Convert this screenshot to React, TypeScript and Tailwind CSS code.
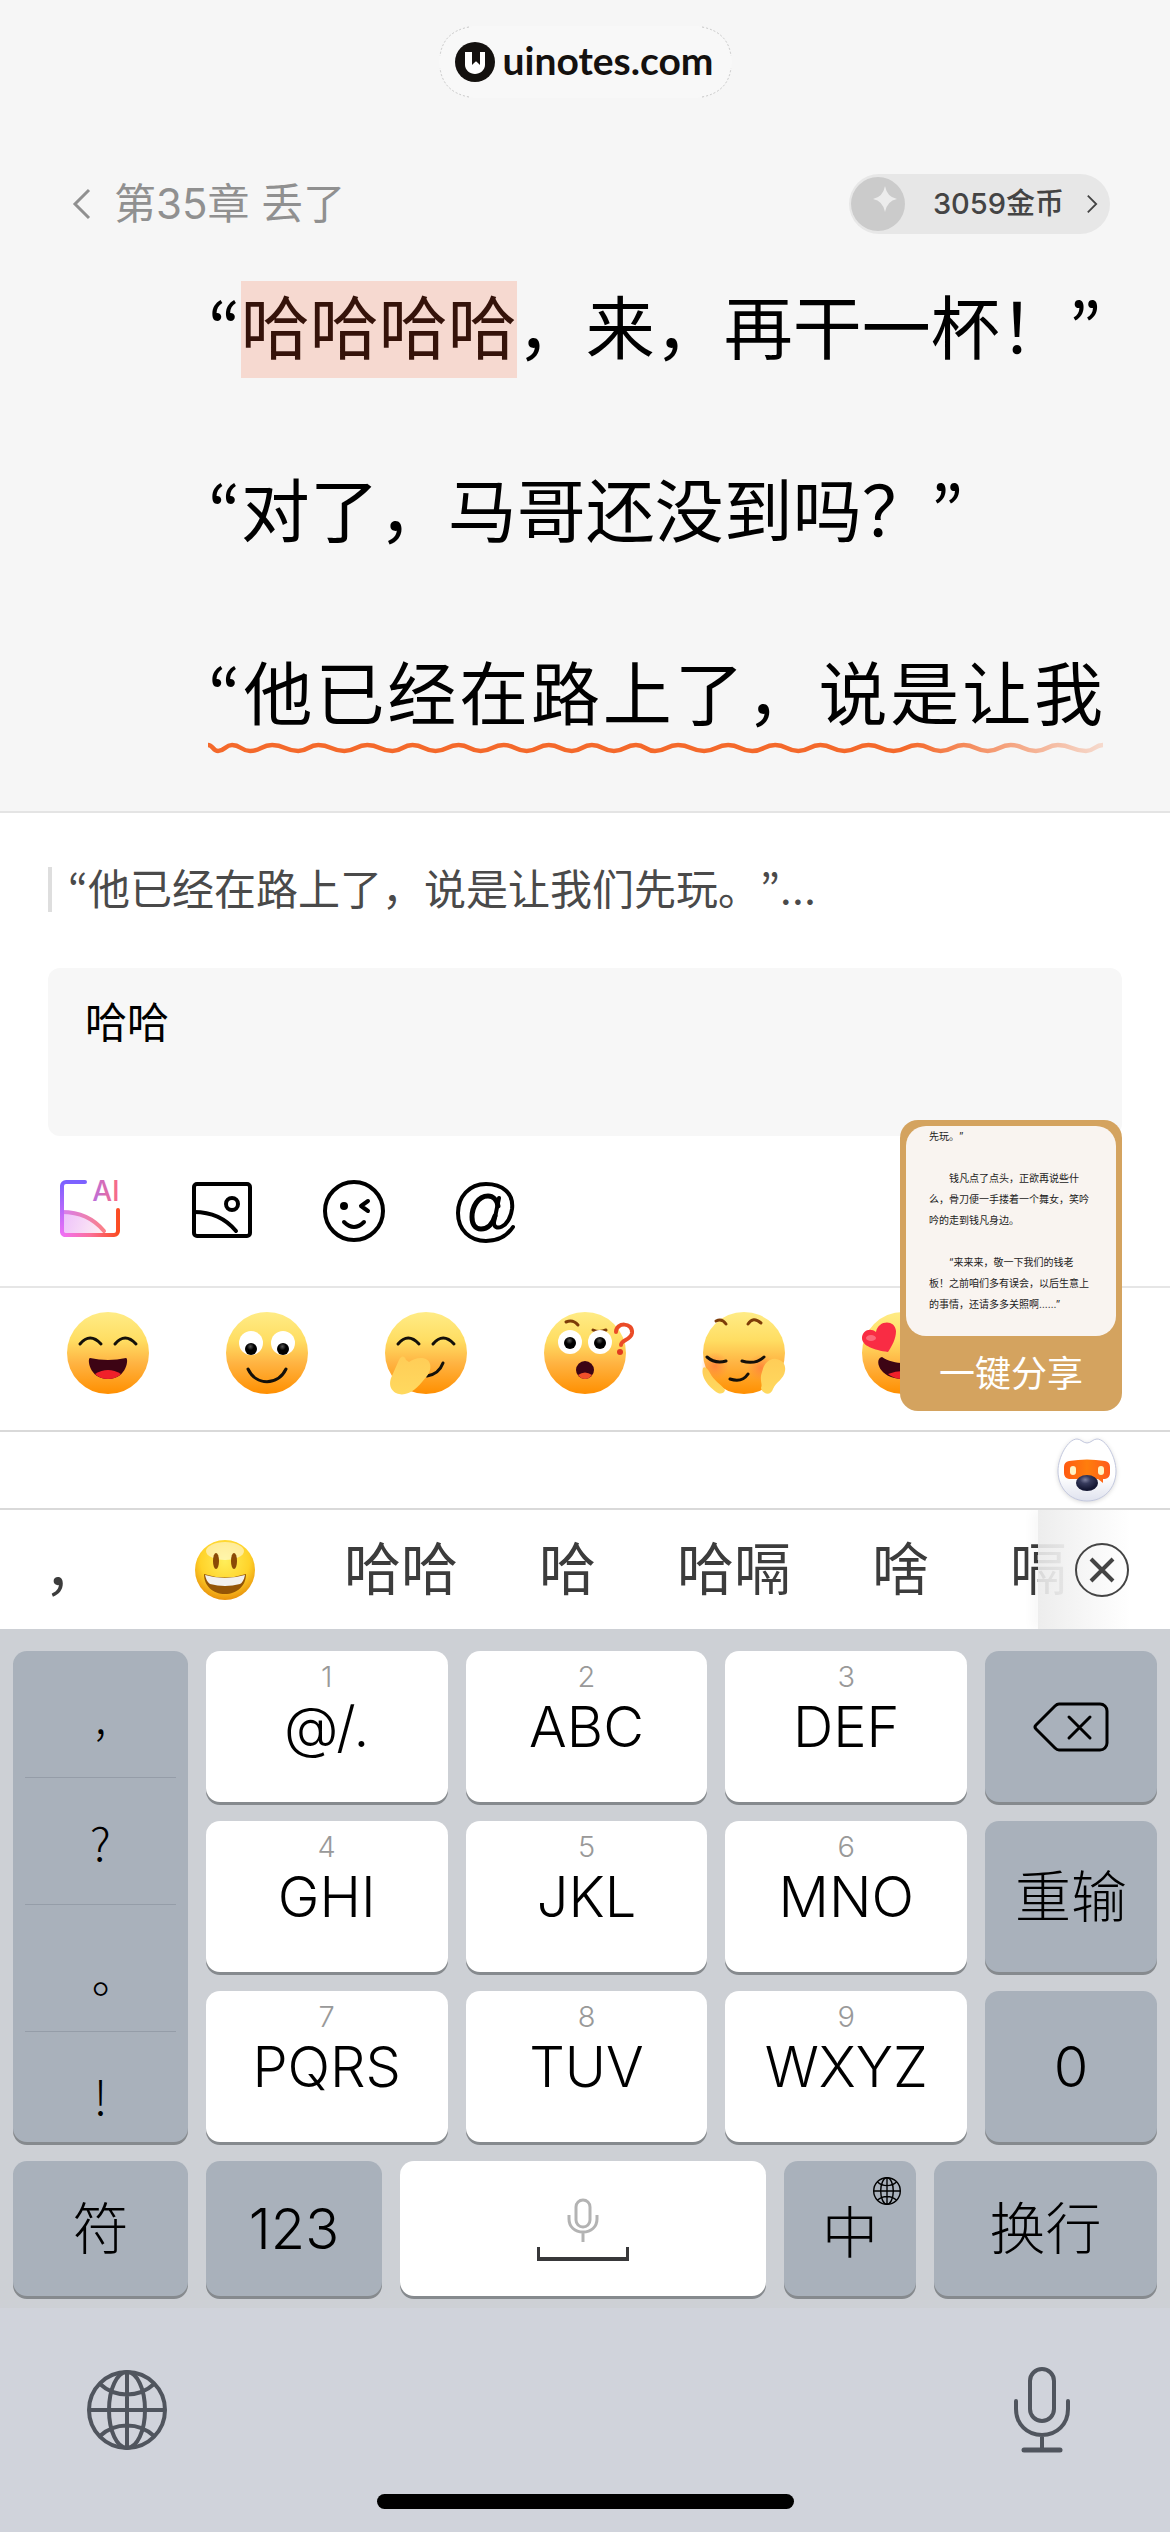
import { ReactNode, useState } from "react";
import { clsx } from "clsx";

interface IconProps {
  className?: string;
}

const TEXT_KEYS = [
  { digit: "1", label: "@/." },
  { digit: "2", label: "ABC" },
  { digit: "3", label: "DEF" },
  { digit: "4", label: "GHI" },
  { digit: "5", label: "JKL" },
  { digit: "6", label: "MNO" },
  { digit: "7", label: "PQRS" },
  { digit: "8", label: "TUV" },
  { digit: "9", label: "WXYZ" },
];

// x positions of the crests and troughs of the hand drawn underline
const WAVE_POINTS = [
  0, 10, 24, 42, 64, 90, 110, 136, 159, 184, 204, 227, 250, 272, 295, 318, 340,
  363, 383, 405, 427, 446, 469, 495, 519, 543, 566, 589, 611, 635, 659, 684,
  708, 731, 754, 778, 801, 826, 848, 876, 893,
];

const WAVE_PATH = WAVE_POINTS.map((x, i) => {
  const y = i % 2 === 0 ? 3 : 9;
  if (i === 0) return `M${x} ${y}`;
  const prevX = WAVE_POINTS[i - 1];
  const prevY = i % 2 === 0 ? 9 : 3;
  const mid = (x + prevX) / 2;
  return `C${mid} ${prevY} ${mid} ${y} ${x} ${y}`;
}).join("");

const Wave = () => (
  <svg
    className="block h-3 w-full"
    viewBox="0 0 893 12"
    preserveAspectRatio="none"
    fill="none"
    aria-hidden="true"
  >
    <defs>
      <linearGradient id="wave" gradientUnits="userSpaceOnUse" x1="0" y1="0" x2="893" y2="0">
        <stop offset="0" stopColor="#f4692b" />
        <stop offset="0.78" stopColor="#f4692b" />
        <stop offset="1" stopColor="#f4692b" stopOpacity="0.2" />
      </linearGradient>
    </defs>
    <path d={WAVE_PATH} stroke="url(#wave)" strokeWidth="4.5" />
  </svg>
);

// Proportional curly quotes: the Korean cut has them, the Chinese one is full width
const Quote = ({ children }: { children: ReactNode }) => (
  <span className="font-['Noto_Sans_CJK_KR',sans-serif] leading-none">{children}</span>
);

const Chevron = ({ className }: IconProps) => (
  <svg className={className} viewBox="0 0 20 32" fill="none" aria-hidden="true">
    <path d="M17 2 3 16l14 14" stroke="currentColor" strokeWidth="3" />
  </svg>
);

const LogoMark = () => (
  <svg className="size-10" viewBox="0 0 40 40" aria-hidden="true">
    <circle cx="20" cy="20" r="20" fill="#14110f" />
    <path d="M10 10h7v13l4-4 4 4V10h5v13c0 5-5 9-10 9s-10-4-10-9z" fill="#fff" />
    <path d="M17 9h8v13l-4-3-4 3z" fill="#14110f" />
  </svg>
);

const AiIcon = () => (
  <svg className="size-16 overflow-visible" viewBox="0 0 64 64" fill="none">
    <defs>
      <linearGradient id="ai" gradientUnits="userSpaceOnUse" x1="34" y1="0" x2="62" y2="0">
        <stop offset="0" stopColor="#b86fe0" />
        <stop offset="1" stopColor="#ff6a7c" />
      </linearGradient>
      <linearGradient id="aiHill" gradientUnits="userSpaceOnUse" x1="4" y1="40" x2="46" y2="56">
        <stop offset="0" stopColor="#eec2fb" />
        <stop offset="1" stopColor="#fff0f2" />
      </linearGradient>
      <linearGradient id="aiArc" gradientUnits="userSpaceOnUse" x1="4" y1="0" x2="46" y2="0">
        <stop offset="0" stopColor="#d77ff0" />
        <stop offset="1" stopColor="#fb7f86" />
      </linearGradient>
      <linearGradient id="aiFrame" gradientUnits="userSpaceOnUse" x1="4" y1="0" x2="60" y2="0">
        <stop offset="0" stopColor="#f171f5" />
        <stop offset="0.5" stopColor="#fb6f9a" />
        <stop offset="1" stopColor="#fb4c22" />
      </linearGradient>
      <linearGradient id="aiLeft" gradientUnits="userSpaceOnUse" x1="0" y1="3" x2="0" y2="57">
        <stop offset="0" stopColor="#7b61ff" />
        <stop offset="1" stopColor="#f171f5" />
      </linearGradient>
    </defs>
    <path d="M4 33c17 0 32 7 42 19l2 4H4z" fill="url(#aiHill)" />
    <path d="M4 33c17 0 32 7 42 19" stroke="url(#aiArc)" strokeWidth="4" strokeLinecap="round" />
    <path d="M27 3H8a4 4 0 0 0-4 4v46a4 4 0 0 0 3 3" stroke="url(#aiLeft)" strokeWidth="4" strokeLinecap="round" />
    <path d="M7 56h49a4 4 0 0 0 4-4V31" stroke="url(#aiFrame)" strokeWidth="4" strokeLinecap="round" />
    <text
      x="48"
      y="22"
      textAnchor="middle"
      className="font-['Inter'] text-[28px] font-medium"
      fill="url(#ai)"
    >
      AI
    </text>
  </svg>
);

const PictureIcon = () => (
  <svg className="size-16" viewBox="0 0 64 64" fill="none" stroke="#000" strokeWidth="4">
    <rect x="4" y="5" width="56" height="52" rx="3" />
    <path d="M4 33c17 0 32 7 42 19" strokeLinecap="round" />
    <circle cx="42" cy="25" r="6" />
  </svg>
);

const WinkIcon = () => (
  <svg className="size-16" viewBox="0 0 64 64" fill="none" stroke="#000" strokeWidth="4" strokeLinecap="round" strokeLinejoin="round">
    <circle cx="32" cy="32" r="29" />
    <circle cx="22" cy="27" r="4" fill="#000" stroke="none" />
    <path d="m46 22-7 5 7 5M22 43q10 10 20 0" />
  </svg>
);

const MentionIcon = () => (
  <svg className="size-16" viewBox="0 0 64 64" fill="none" stroke="#000" strokeLinecap="round" strokeWidth="4">
    <path d="M45 19l-5 24c-1 10 15 7 18-13C60 14 48 5 32 5 15 5 4 18 4 34c0 17 12 28 28 28 12 0 21-5 27-14" />
    <path d="M44 27c-1-6-5-10-10-10-10 0-16 11-16 21 0 7 3 12 9 12 7 0 12-6 14-13" strokeWidth="5" />
  </svg>
);

const GlobeIcon = ({ className }: IconProps) => (
  <svg className={className} viewBox="0 0 80 80" fill="none" stroke="currentColor" strokeWidth="4" aria-hidden="true">
    <circle cx="40" cy="40" r="38" />
    <ellipse cx="40" cy="40" rx="18" ry="38" />
    <path d="M40 2v76M2 40h76M13 14c15 14 39 14 54 0M13 66c15-14 39-14 54 0" />
  </svg>
);

const MicIcon = ({ className }: IconProps) => (
  <svg className={className} viewBox="0 0 56 86" fill="none" stroke="currentColor" aria-hidden="true">
    <rect x="16" y="2" width="24" height="52" rx="12" strokeWidth="4" />
    <path d="M2 34v8c0 15 11 26 26 26s26-11 26-26v-8M28 68v14" strokeWidth="4" strokeLinecap="round" />
    <path d="M10 83h36" strokeWidth="5" strokeLinecap="round" />
  </svg>
);

const SmallMicIcon = () => (
  <svg className="h-11 w-8" viewBox="0 0 32 44" fill="none" stroke="#b3b3b3" strokeWidth="3" aria-hidden="true">
    <rect x="9" y="2" width="14" height="27" rx="7" />
    <path d="M2 17v4c0 8 6 13 14 13s14-5 14-13v-4M16 34v10" />
  </svg>
);

const BackspaceIcon = () => (
  <svg className="h-[50px] w-[76px]" viewBox="0 0 76 50" fill="none" stroke="#000" strokeWidth="3" strokeLinecap="round" strokeLinejoin="round">
    <path d="M26 2h41a7 7 0 0 1 7 7v32a7 7 0 0 1-7 7H26q-2 0-4-2L3 27q-2-2 0-4L22 4q2-2 4-2z" />
    <path d="m36 15 21 21M57 15 36 36" />
  </svg>
);

const Mascot = () => (
  <svg className="h-[68px] w-[64px] drop-shadow-sm" viewBox="0 0 64 68">
    <defs>
      <linearGradient id="head" x1="0" y1="0" x2="0" y2="1">
        <stop offset="0.6" stopColor="#fff" />
        <stop offset="1" stopColor="#dfe2ee" />
      </linearGradient>
      <linearGradient id="visor" x1="0" y1="0" x2="1" y2="0">
        <stop offset="0" stopColor="#ff5a12" />
        <stop offset="0.5" stopColor="#ff7e0c" />
        <stop offset="1" stopColor="#ff5a1c" />
      </linearGradient>
      <radialGradient id="nose" cx="0.42" cy="0.3" r="0.6">
        <stop offset="0" stopColor="#7d809f" />
        <stop offset="0.4" stopColor="#363a5c" />
        <stop offset="1" stopColor="#141733" />
      </radialGradient>
    </defs>
    <path
      d="M22 3c4 0 6 4 10 4s6-4 10-4c9 0 19 18 19 32 0 17-12 30-29 30S3 52 3 35C3 21 13 3 22 3z"
      fill="url(#head)"
      stroke="#c3c8de"
    />
    <path d="M14 25q18-3 36 0 5 1 5 6v6q0 5-5 6h-2v4l-5-4H14q-5-1-5-6v-6q0-5 5-6z" fill="url(#visor)" />
    <rect x="15" y="30" width="6" height="9" rx="3" fill="#fff3c4" />
    <rect x="43" y="30" width="6" height="9" rx="3" fill="#fff3c4" />
    <ellipse cx="32" cy="47" rx="11" ry="8" fill="url(#nose)" />
  </svg>
);

const Grinning = () => (
  <svg className="size-[60px]" viewBox="0 0 60 60">
    <defs>
      <radialGradient id="grin" cx="0.5" cy="0.35" r="0.68">
        <stop offset="0" stopColor="#ffee5a" />
        <stop offset="0.6" stopColor="#ffd32a" />
        <stop offset="1" stopColor="#e68a08" />
      </radialGradient>
    </defs>
    <circle cx="30" cy="30" r="30" fill="url(#grin)" />
    <ellipse cx="30" cy="11" rx="19" ry="9" fill="#fff" opacity="0.5" />
    <ellipse cx="21" cy="21" rx="3" ry="8" fill="#8a4a06" />
    <ellipse cx="39" cy="21" rx="3" ry="8" fill="#8a4a06" />
    <path d="M9 34q21 7 42 0c0 12-9 20-21 20S9 46 9 34z" fill="#945506" />
    <path d="M10 35q20 6 40 0c-1 5-3 8-5 9q-15 4-30 0c-3-2-4-5-5-9z" fill="#f3f1ee" />
  </svg>
);

// Yellow ball shared by the whole sticker row
const Face = ({ label, children }: { label: string; children: ReactNode }) => (
  <button type="button" aria-label={label} className="shrink-0">
    <svg className="size-[82px] overflow-visible" viewBox="0 0 82 82" fill="none" strokeLinecap="round">
      <circle cx="41" cy="41" r="41" fill="url(#ball)" />
      {children}
    </svg>
  </button>
);

const FaceDefs = () => (
  <svg className="absolute size-0" aria-hidden="true">
    <defs>
      <linearGradient id="ball" x1="0" y1="0" x2="0" y2="1">
        <stop offset="0" stopColor="#ffec86" />
        <stop offset="0.35" stopColor="#ffdd62" />
        <stop offset="0.62" stopColor="#ffb443" />
        <stop offset="1" stopColor="#ff8f00" />
      </linearGradient>
      <linearGradient id="hand" x1="0" y1="0" x2="0" y2="1">
        <stop offset="0" stopColor="#ffcd57" />
        <stop offset="1" stopColor="#ffd95f" />
      </linearGradient>
      <radialGradient id="pupil" cx="0.45" cy="0.3" r="0.6">
        <stop offset="0" stopColor="#555" />
        <stop offset="0.5" stopColor="#000" />
      </radialGradient>
      <radialGradient id="blush">
        <stop offset="0" stopColor="#ff7a3c" stopOpacity="0.75" />
        <stop offset="1" stopColor="#ff8a3c" stopOpacity="0" />
      </radialGradient>
    </defs>
  </svg>
);

const Stickers = () => (
  <div className="flex h-[142px] items-start gap-[77px] overflow-hidden pt-6 pl-[67px]">
    <FaceDefs />
    <Face label="大笑">
      <path d="M13 32q10-12 21 0M48 32q10-12 21 0" stroke="#14100a" strokeWidth="3" />
      <path d="M23 46q18 4 36 0c3 0 1 21-18 21S20 46 23 46z" fill="#3d0414" />
      <path d="M28 62q13-8 26 0-5 5-13 5t-13-5z" fill="#f0202a" />
    </Face>
    <Face label="微笑">
      <circle cx="25" cy="31" r="12" fill="#fff" />
      <circle cx="57" cy="31" r="12" fill="#fff" />
      <circle cx="25" cy="37" r="6" fill="url(#pupil)" />
      <circle cx="57" cy="37" r="6" fill="url(#pupil)" />
      <path d="M22 57c8 17 30 17 38 0" stroke="#14100a" strokeWidth="3" />
    </Face>
    <Face label="偷笑">
      <path d="M13 32q10-12 21 0M48 32q10-12 21 0" stroke="#14100a" strokeWidth="3" />
      <path d="M42 64q12-2 16-13" stroke="#14100a" strokeWidth="3" />
      <path d="M21 48c-2-5-5-4-7 0L6 66c-4 12 6 18 14 16 10-2 15-10 22-18 6-8 4-18-6-18-5 0-9 2-12 4z" fill="url(#hand)" />
    </Face>
    <Face label="疑问">
      <path d="M22 10q7-3 12 3M49 18q6 3 13 0" stroke="#7d3c08" strokeWidth="3" />
      <circle cx="26" cy="30" r="12" fill="#fff" />
      <circle cx="56" cy="30" r="12" fill="#fff" />
      <circle cx="26" cy="31" r="6" fill="url(#pupil)" />
      <circle cx="56" cy="31" r="6" fill="url(#pupil)" />
      <ellipse cx="41" cy="58" rx="9" ry="9" fill="#3d0414" />
      <path d="M34 63q7-5 14 0-3 4-7 4t-7-4z" fill="#f2502a" />
      <path d="M72 20c0-10 17-10 16 1-1 7-11 7-11 12" stroke="#ea4b27" strokeWidth="4" />
      <circle cx="76" cy="40" r="3" fill="#e03a20" />
    </Face>
    <Face label="害羞">
      <circle cx="12" cy="54" r="14" fill="url(#blush)" />
      <circle cx="58" cy="56" r="14" fill="url(#blush)" />
      <path d="M13 9q6-3 10 3M45 12q5-8 13-1" stroke="#7d3c08" strokeWidth="3" />
      <path d="M4 45q8 7 19 4M39 49q13 4 22-4M27 67q12 4 18-5" stroke="#14100a" strokeWidth="3" />
      <path d="M0 56c2-2 5 1 7 5 4 8 10 10 15 17-1 4-5 4-7 3C8 77-3 66 0 56z" fill="url(#hand)" />
      <path d="M58 76c2-4-2-8 1-16 2-9 8-14 14-13 7 1 10 6 9 12-1 8-9 11-12 18-2 7-10 6-12-1z" fill="url(#hand)" />
    </Face>
    <Face label="喜欢">
      <path d="M26 40C12 38 0 34 0 26c0-7 8-11 14-6 2-12 19-13 20-1 0 8-4 15-8 21z" fill="#f92c44" />
      <ellipse cx="9" cy="26" rx="5" ry="3" fill="#ff8f9c" opacity="0.6" />
      <path d="M20 45c12 8 32 8 44 0 8 0 2 22-23 22S12 46 20 45z" fill="#3d0414" />
      <path d="M26 62q15-6 30 0-6 5-15 5t-15-5z" fill="#f0202a" />
    </Face>
  </div>
);

interface KeyProps {
  className?: string;
  label?: string;
  light?: boolean;
  children: ReactNode;
}

const Key = ({ className, label, light, children }: KeyProps) => (
  <button
    type="button"
    aria-label={label}
    className={clsx(
      "flex flex-col items-center rounded-[14px] text-[56px] font-light shadow-[0_3px_0_#868a8e]",
      light ? "bg-white" : "bg-[#a9b1bb]",
      className
    )}
  >
    {children}
  </button>
);

const SharePreview = () => (
  <button
    type="button"
    className="absolute top-[307px] right-12 flex h-[291px] w-[222px] flex-col items-center rounded-[18px] bg-[#d4a35f] pt-[6px]"
  >
    <span className="block h-[210px] w-[210px] overflow-hidden rounded-[20px] bg-[#f9f4f0] px-[23px] text-left text-[10px] leading-[21px] text-[#222]">
      <span className="mb-[21px] block">先玩。”</span>
      <span className="mb-[21px] block indent-[20px]">
        钱凡点了点头，正欲再说些什么，骨刀便一手搂着一个舞女，笑吟吟的走到钱凡身边。
      </span>
      <span className="block indent-[20px]">
        “来来来，敬一下我们的钱老板！之前咱们多有误会，以后生意上的事情，还请多多关照啊……”
      </span>
    </span>
    <span className="flex grow items-center text-[36px] leading-[48px] text-white">一键分享</span>
  </button>
);

const Reader = () => (
  <section className="border-b-2 border-[#e4e4e4] bg-[#f6f6f6] pt-[26px] pb-[57px]">
    <div className="relative mx-auto flex h-[72px] w-[293px] items-center gap-2 rounded-[36px] bg-[#f8f8f8] pl-4">
      <svg className="absolute inset-0 size-full" viewBox="0 0 293 72" fill="none" stroke="#c8c8c8" strokeDasharray="2 2" aria-hidden="true">
        <path d="M30 1Q4 6 1 30M263 1q26 5 29 29M30 71Q4 66 1 42M263 71q26-5 29-29" />
      </svg>
      <LogoMark />
      <span className="pb-1 font-['Lato'] text-[39px] leading-[48px] font-bold text-[#14110f]">
        uinotes.com
      </span>
    </div>

    <header className="mt-[76px] flex h-[60px] items-center justify-between pr-[60px] pl-[72px]">
      <button type="button" className="flex items-center gap-[22px] text-[42px] leading-[60px] text-[#909090]">
        <Chevron className="h-8 w-5" />
        第35章 丢了
      </button>
      <button
        type="button"
        className="flex h-[60px] items-center rounded-full bg-[#e7e7e7] pr-3 pl-[2px] text-[#444]"
      >
        <svg className="size-[54px]" viewBox="0 0 54 54" aria-hidden="true">
          <circle cx="27" cy="27" r="27" fill="#cbcbcb" />
          <path d="M34 9q2 11 12 13-10 2-12 13-2-11-12-13 10-2 12-13z" fill="#ececec" />
        </svg>
        <span className="pl-[28px] text-[29px] font-medium">3059金币</span>
        <Chevron className="ml-[22px] h-5 w-3 rotate-180" />
      </button>
    </header>

    <div className="mt-[47px] flex flex-col gap-[86px] pr-[67px] pl-[208px] text-[69px] leading-[97px] whitespace-nowrap text-black">
      <p>
        <Quote>“</Quote>
        <mark className="inline-block bg-[#f6d9d0] text-[#35130a]">哈哈哈哈</mark>
        ，来，再干一杯！<Quote>”</Quote>
      </p>
      <p>
        <Quote>“</Quote>对了，马哥还没到吗？<Quote>”</Quote>
      </p>
      <div>
        <p className="-mb-[2px] [text-align-last:justify]">
          <Quote>“</Quote>他已经在路上了，说是让我
        </p>
        <Wave />
      </div>
    </div>
  </section>
);

const Composer = () => {
  const [comment, setComment] = useState<string>("哈哈");

  return (
    <section className="relative bg-white">
      <div className="px-12 pt-[54px]">
        <blockquote className="flex h-[45px] items-center border-l-4 border-[#dedede] pl-4 text-[42px] text-[#4a4a4a]">
          <p>
            <Quote>“</Quote>他已经在路上了，说是让我们先玩。<Quote>”</Quote>…
          </p>
        </blockquote>
        <textarea
          aria-label="评论"
          value={comment}
          onChange={(e) => setComment(e.target.value)}
          className="mt-[56px] block h-[168px] w-full resize-none rounded-xl bg-[#f7f7f7] px-[37px] pt-[25px] text-[42px] leading-[60px] text-black outline-none"
        />
      </div>
      <div className="flex h-[152px] items-center gap-[68px] border-b-2 border-[#e6e6e6] pl-[58px]">
        <button type="button" aria-label="AI 图片">
          <AiIcon />
        </button>
        <button type="button" aria-label="图片">
          <PictureIcon />
        </button>
        <button type="button" aria-label="表情">
          <WinkIcon />
        </button>
        <button type="button" aria-label="提到">
          <MentionIcon />
        </button>
      </div>
      <Stickers />
      <SharePreview />
    </section>
  );
};

const Candidates = () => (
  <div className="relative flex h-[119px] items-center gap-[81px] overflow-hidden bg-white pl-[44px] text-[57px] whitespace-nowrap text-[#3c3c3c]">
    <button type="button">，</button>
    <button type="button" aria-label="笑脸" className="flex w-[81px] shrink-0 justify-end pr-2">
      <Grinning />
    </button>
    {["哈哈", "哈", "哈嗝", "啥", "嗝"].map((word) => (
      <button type="button" key={word}>
        {word}
      </button>
    ))}
    <div className="absolute inset-y-0 right-0 flex w-[132px] items-center bg-linear-to-r from-[#ebebeb]/90 to-white to-70% pl-[37px] shadow-[-6px_0_10px_rgba(0,0,0,0.03)]">
      <button type="button" aria-label="清空">
        <svg className="size-[54px]" viewBox="0 0 54 54" fill="none" stroke="#444">
          <circle cx="27" cy="27" r="26" strokeWidth="2" />
          <path d="m16 16 22 22M38 16 16 38" strokeWidth="4" />
        </svg>
      </button>
    </div>
  </div>
);

const Keyboard = () => (
  <section className="bg-[#cdd0d5] text-black">
    <div className="px-[13px] pt-[22px] pb-3">
      <div className="grid auto-rows-[151px] grid-cols-[175fr_242fr_242fr_242fr_172fr] gap-x-[18px] gap-y-[19px]">
        <div className="row-span-3 flex flex-col overflow-hidden rounded-[14px] bg-[#a9b1bb] px-3 font-['Noto_Sans_CJK_TC',sans-serif] text-[46px] font-light shadow-[0_3px_0_#868a8e]">
          <button type="button" className="h-[127px] shrink-0 border-b border-[#959da8]">,</button>
          <button type="button" className="h-[127px] shrink-0 border-b border-[#959da8]">?</button>
          <button type="button" className="h-[127px] shrink-0 border-b border-[#959da8] pt-9">。</button>
          <button type="button" className="h-[127px] shrink-0">!</button>
        </div>
        {TEXT_KEYS.map(({ digit, label }, i) => (
          <Key
            key={digit}
            light
            className={clsx("pt-[10px]", {
              "col-start-2": i % 3 === 0,
              "col-start-3": i % 3 === 1,
              "col-start-4": i % 3 === 2,
              "row-start-1": i < 3,
              "row-start-2": i >= 3 && i < 6,
              "row-start-3": i >= 6,
            })}
          >
            <span className="text-[29px] leading-8 text-[#999]">{digit}</span>
            <span className="leading-[68px]">{label}</span>
          </Key>
        ))}
        <Key label="删除" className="col-start-5 row-start-1 justify-center">
          <BackspaceIcon />
        </Key>
        <Key className="col-start-5 row-start-2 justify-center">重输</Key>
        <Key className="col-start-5 row-start-3 justify-center">0</Key>
      </div>

      <div className="mt-[19px] grid h-[135px] grid-cols-[175fr_176fr_366fr_132fr_223fr] gap-x-[18px]">
        <Key className="justify-center">符</Key>
        <Key className="justify-center">123</Key>
        <Key light label="空格" className="justify-end pb-[35px]">
          <SmallMicIcon />
          <span className="mt-[5px] h-[14px] w-[92px] border-x-3 border-b-4 border-[#38383a]" />
        </Key>
        <Key className="relative justify-center pt-2 text-[48px]">
          中
          <GlobeIcon className="absolute top-4 right-[15px] size-7" />
        </Key>
        <Key className="justify-center">换行</Key>
      </div>
    </div>

    <div className="bg-[#d0d3db] pb-[23px]">
      <div className="flex items-center justify-between pt-[59px] pr-[100px] pl-[87px] text-[#50555e]">
        <button type="button" aria-label="切换键盘">
          <GlobeIcon className="size-20" />
        </button>
        <button type="button" aria-label="语音输入">
          <MicIcon className="h-[86px] w-[56px]" />
        </button>
      </div>
      <div className="mx-auto mt-[41px] h-[15px] w-[417px] rounded-full bg-black" />
    </div>
  </section>
);

export default function App() {
  return (
    <main className="w-full overflow-hidden bg-white font-['Inter','Noto_Sans_CJK_SC',sans-serif] [text-spacing-trim:space-all]">
      <Reader />
      <Composer />
      <div className="flex h-20 items-center justify-end border-y-2 border-[#d9d9d9] pr-[51px]">
        <button type="button" aria-label="助手">
          <Mascot />
        </button>
      </div>
      <Candidates />
      <Keyboard />
    </main>
  );
}
